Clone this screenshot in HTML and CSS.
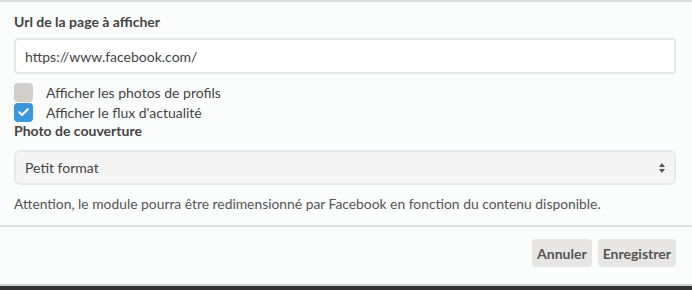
FILE: index.html
```html
<!DOCTYPE html>
<html lang="fr">
<head>
    <meta charset="UTF-8">
    <title>Module Facebook</title>
    <link rel="stylesheet" href="styles.css">
</head>
<body>
    <div class="modal">
        <div class="modal-body">
            <label class="field-label" for="url">Url de la page à afficher</label>
            <input type="text" id="url" class="text-input" value="https://www.facebook.com/">

            <div class="checks">
                <label class="check">
                    <span class="box"></span>
                    <span>Afficher les photos de profils</span>
                </label>
                <label class="check">
                    <span class="box checked">
                        <svg viewBox="0 0 20 20" width="20" height="20"><path d="M5.5 10.2l3 3 6-6.2" fill="none" stroke="#fff" stroke-width="2.2" stroke-linecap="round" stroke-linejoin="round"/></svg>
                    </span>
                    <span>Afficher le flux d'actualité</span>
                </label>
            </div>

            <label class="field-label" for="cover">Photo de couverture</label>
            <div class="select" id="cover">
                <span>Petit format</span>
                <svg viewBox="0 0 8 12" width="8" height="12"><path d="M4 1l3 4H1z M4 11l3-4H1z" fill="#555"/></svg>
            </div>
            <p class="help">Attention, le module pourra être redimensionné par Facebook en fonction du contenu disponible.</p>
        </div>
        <div class="modal-footer">
            <button class="btn">Annuler</button>
            <button class="btn">Enregistrer</button>
        </div>
    </div>
</body>
</html>
```

FILE: styles.css
```css
body {
    margin: 0;
    padding: 0;
    font-family: 'Lato', 'Liberation Sans', sans-serif;
    background: #333333;
    color: #444444;
}

.modal {
    background: #fbfcfc;
    border-top: 2px solid #dcdcdc;
    border-bottom: 2px solid #d0d0d0;
    height: 282px;
    display: flex;
    flex-direction: column;
}

.modal-body {
    padding: 11px 16px 0 14px;
    display: flex;
    flex-direction: column;
}

.field-label {
    font-size: 14px;
    font-weight: bold;
    color: #444;
    line-height: 18px;
}

.text-input {
    margin-top: 7px;
    height: 36px;
    box-sizing: border-box;
    border: 2px solid #e6e6e6;
    border-radius: 4px;
    background: #fff;
    padding: 0 9px;
    font-family: inherit;
    font-size: 14px;
    color: #444;
    outline: none;
}

.checks {
    margin-top: 8px;
    display: flex;
    flex-direction: column;
}

.check {
    display: flex;
    align-items: center;
    font-size: 14px;
    color: #444;
    height: 20px;
}

.box {
    width: 19px;
    height: 19px;
    border-radius: 4px;
    background: #d1cfcc;
    margin-right: 13px;
    display: flex;
    align-items: center;
    justify-content: center;
}

.box.checked {
    background: #3a97dd;
}

.select {
    margin-top: 10px;
    height: 35px;
    box-sizing: border-box;
    border: 2px solid #e8e8e8;
    border-radius: 6px;
    background: #f5f5f5;
    padding: 0 8px 0 9px;
    display: flex;
    align-items: center;
    justify-content: space-between;
    font-size: 14px;
}

.help {
    margin: 10px 0 0;
    font-size: 13.85px;
    line-height: 18px;
    color: #555;
}

.modal-footer {
    margin-top: 12px;
    border-top: 2px solid #dedede;
    display: flex;
    justify-content: flex-end;
    gap: 6px;
    padding: 12px 16px 0 0;
}

.btn {
    background: #e8e6e4;
    border: none;
    border-radius: 4px;
    height: 28px;
    padding: 0 5px;
    font-family: inherit;
    font-size: 14px;
    font-weight: bold;
    color: #555;
    cursor: pointer;
}
```
